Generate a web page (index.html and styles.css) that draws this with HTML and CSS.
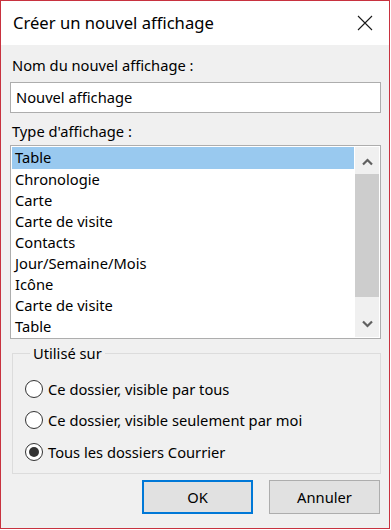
FILE: index.html
```html
<!DOCTYPE html>
<html lang="fr">
<head>
  <meta charset="UTF-8">
  <meta name="viewport" content="width=device-width, initial-scale=1">
  <title>Créer un nouvel affichage</title>
  <link rel="stylesheet" href="styles.css">
</head>
<body>

<div class="window">
  <div class="titlebar">
    <span class="title">Créer un nouvel affichage</span>
    <svg class="close" width="16" height="16" viewBox="0 0 16 16">
      <path d="M1 1 L15 15 M15 1 L1 15" stroke="#1a1a1a" stroke-width="1.1" fill="none"/>
    </svg>
  </div>

  <div class="content">
    <div class="label">Nom du nouvel affichage :</div>
    <div class="textbox">Nouvel affichage</div>

    <div class="label label-type">Type d'affichage :</div>
    <div class="listbox">
      <ul class="items">
        <li class="selected">Table</li>
        <li>Chronologie</li>
        <li>Carte</li>
        <li>Carte de visite</li>
        <li>Contacts</li>
        <li>Jour/Semaine/Mois</li>
        <li>Icône</li>
        <li>Carte de visite</li>
        <li>Table</li>
      </ul>
      <div class="scrollbar">
        <div class="arrow">
          <svg width="11" height="8" viewBox="0 0 11 8"><polyline points="1,6.5 5.5,2 10,6.5" stroke="#606060" stroke-width="2.2" fill="none"/></svg>
        </div>
        <div class="thumb"></div>
        <div class="arrow arrow-down">
          <svg width="11" height="8" viewBox="0 0 11 8"><polyline points="1,1.5 5.5,6 10,1.5" stroke="#606060" stroke-width="2.2" fill="none"/></svg>
        </div>
      </div>
    </div>

    <fieldset class="group">
      <legend>Utilisé sur</legend>
      <div class="radio"><span class="dot"></span>Ce dossier, visible par tous</div>
      <div class="radio"><span class="dot"></span>Ce dossier, visible seulement par moi</div>
      <div class="radio"><span class="dot checked"></span>Tous les dossiers Courrier</div>
    </fieldset>

    <div class="buttons">
      <button class="btn btn-default">OK</button>
      <button class="btn">Annuler</button>
    </div>
  </div>
</div>

</body>
</html>
```

FILE: styles.css
```css
body {
  margin: 0;
  padding: 0;
  background: #ffffff;
  font-family: 'Noto Sans', 'Open Sans', sans-serif;
  font-size: 14.7px;
  color: #000;
}
.window {
  width: 388px;
  height: 527px;
  border: 1px solid #c8323f;
  background: #f0f0f0;
  display: flex;
  flex-direction: column;
}
.titlebar {
  height: 44px;
  background: #fff;
  display: flex;
  align-items: center;
  justify-content: space-between;
  padding: 0 16px 0 12px;
}
.title {
  font-size: 16.6px;
  margin-top: -1px;
}
.close {
  margin-top: -1px;
}
.content {
  padding: 0 8px 0 9px;
  flex: 1;
}
.label {
  margin-top: 10px;
  height: 20px;
  line-height: 20px;
  padding-left: 2px;
}
.textbox {
  margin-top: 7px;
  height: 29px;
  border: 1px solid #adadad;
  background: #fff;
  line-height: 29px;
  padding-left: 5px;
}
.label-type {
  margin-top: 8px;
}
.listbox {
  margin-top: 4px;
  height: 190px;
  border: 1px solid #adadad;
  background: #fff;
  display: flex;
  padding: 1px;
}
.items {
  list-style: none;
  margin: 0;
  padding: 0;
  flex: 1;
}
.items li {
  height: 21px;
  line-height: 20px;
  padding-left: 3px;
  white-space: nowrap;
}
.items li.selected {
  background: #99c9ef;
  height: 22px;
}
.scrollbar {
  width: 24px;
  margin-left: 1px;
  background: #f0f0f0;
  display: flex;
  flex-direction: column;
}
.arrow {
  height: 27px;
  display: flex;
  align-items: center;
  justify-content: center;
}
.arrow svg {
  margin-top: 2px;
}
.arrow-down {
  height: 39px;
}
.arrow-down svg {
  margin-top: 14px;
}
.thumb {
  height: 123px;
  background: #cdcdcd;
}
.group {
  margin: 4px 0 0 2px;
  padding: 10px 0 0 12px;
  border: 1px solid #dcdcdc;
  height: 131px;
  box-sizing: border-box;
}
.group legend {
  padding: 0 3px;
  margin-left: 5px;
  line-height: 20px;
}
.radio {
  display: flex;
  align-items: center;
  height: 31.5px;
  white-space: nowrap;
}
.dot {
  width: 18px;
  height: 18px;
  border: 1px solid #333;
  border-radius: 50%;
  background: #fff;
  margin-right: 5px;
  box-sizing: border-box;
  display: flex;
  align-items: center;
  justify-content: center;
}
.dot.checked::after {
  content: '';
  width: 10px;
  height: 10px;
  border-radius: 50%;
  background: #333;
}
.buttons {
  display: flex;
  justify-content: flex-end;
  gap: 16px;
  margin-top: 6px;
  padding-right: 1px;
}
.btn {
  width: 111px;
  height: 34px;
  background: #e1e1e1;
  border: 1px solid #adadad;
  font-family: inherit;
  font-size: 14.7px;
  color: #000;
  padding: 0;
}
.btn-default {
  border: 2px solid #0078d7;
}
```
